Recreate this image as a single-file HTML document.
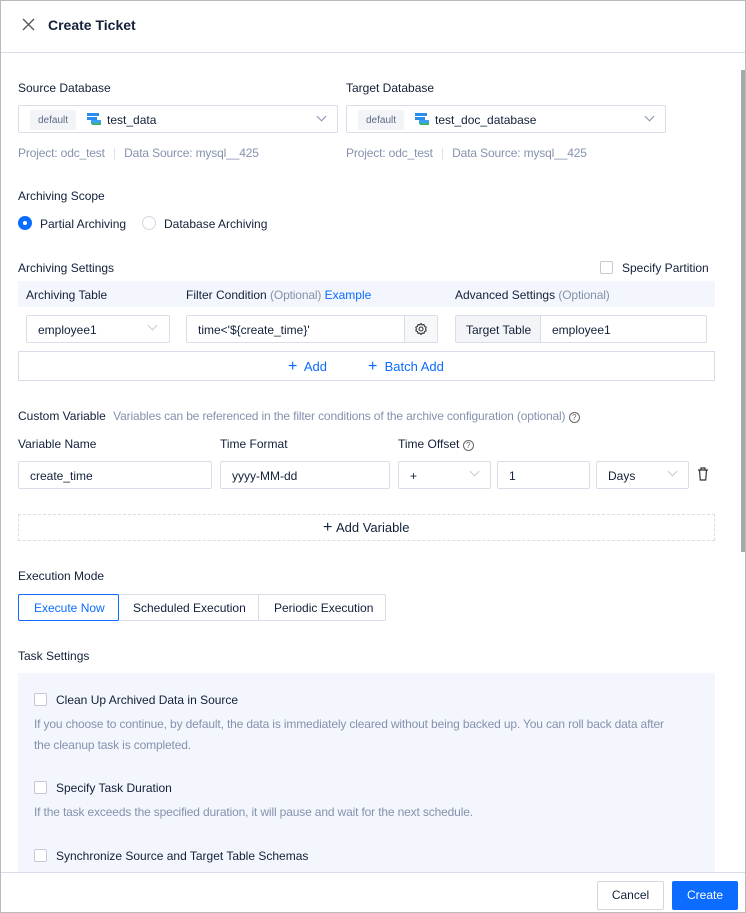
<!DOCTYPE html>
<html><head><meta charset="utf-8"><style>
*{box-sizing:border-box;margin:0;padding:0}
body{width:746px;height:913px;overflow:hidden;background:#fff;font-family:"Liberation Sans",sans-serif;font-size:12px;color:#132039;position:relative}
.a{position:absolute;white-space:nowrap}
.frame{position:absolute;left:0;top:0;width:746px;height:913px;border:1px solid #b9b9b9;pointer-events:none}
.box{position:absolute;border:1px solid #d9dde8;border-radius:2px;background:#fff}
.g{color:#8592ad;letter-spacing:-0.15px}
.lbl{font-size:12px;color:#132039}
.blue{color:#0b6cff}
.chev{position:absolute;width:7px;height:7px;border-right:1px solid #8592ad;border-bottom:1px solid #8592ad;transform:rotate(45deg)}
.tag{position:absolute;background:#f3f4f8;color:#5c6a84;font-size:10px;padding:0 8px;height:20px;line-height:21px;border-radius:2px}
.cb{position:absolute;width:13px;height:13px;border:1px solid #c5cad6;border-radius:2px;background:#fff}
</style></head><body>
<svg class="a" style="left:22px;top:18px" width="13" height="13"><path d="M1 1L12 12M12 1L1 12" stroke="#555" stroke-width="1.3"/></svg>
<div class="a" style="left:48px;top:17px;font-size:14px;font-weight:bold">Create Ticket</div>
<div class="a" style="left:0;top:52px;width:746px;height:1px;background:#d9dde8"></div>

<div class="a lbl" style="left:18px;top:81px">Source Database</div>
<div class="box" style="left:18px;top:105px;width:320px;height:28px"></div>
<div class="tag" style="left:30px;top:110px">default</div>
<svg class="a" style="left:86px;top:112px" width="16" height="14"><rect x="1" y="1" width="12" height="3" fill="#2b8cf0"/><rect x="1" y="5" width="10" height="3" fill="#2b8cf0"/><rect x="5" y="8" width="10" height="4" fill="#3aa0f5"/><rect x="6" y="11" width="9" height="2" fill="#3bb56b"/></svg>
<div class="a" style="left:107px;top:113px">test_data</div>
<div class="chev" style="left:318px;top:113px"></div>
<div class="a g" style="left:18px;top:146px">Project: odc_test <span style="color:#d9dde8;margin:0 5px">|</span> Data Source: mysql__425</div>

<div class="a lbl" style="left:346px;top:81px">Target Database</div>
<div class="box" style="left:346px;top:105px;width:320px;height:28px"></div>
<div class="tag" style="left:358px;top:110px">default</div>
<svg class="a" style="left:414px;top:112px" width="16" height="14"><rect x="1" y="1" width="12" height="3" fill="#2b8cf0"/><rect x="1" y="5" width="10" height="3" fill="#2b8cf0"/><rect x="5" y="8" width="10" height="4" fill="#3aa0f5"/><rect x="6" y="11" width="9" height="2" fill="#3bb56b"/></svg>
<div class="a" style="left:435px;top:113px">test_doc_database</div>
<div class="chev" style="left:646px;top:113px"></div>
<div class="a g" style="left:346px;top:146px">Project: odc_test <span style="color:#d9dde8;margin:0 5px">|</span> Data Source: mysql__425</div>

<div class="a lbl" style="left:18px;top:189px">Archiving Scope</div>
<div class="a" style="left:18px;top:216px;width:14px;height:14px;border-radius:50%;background:#0b6cff"></div>
<div class="a" style="left:23px;top:221px;width:4px;height:4px;border-radius:50%;background:#fff"></div>
<div class="a" style="left:40px;top:217px">Partial Archiving</div>
<div class="a" style="left:142px;top:216px;width:14px;height:14px;border-radius:50%;border:1px solid #d3d7e0"></div>
<div class="a" style="left:164px;top:217px">Database Archiving</div>

<div class="a lbl" style="left:18px;top:261px">Archiving Settings</div>
<div class="cb" style="left:600px;top:261px"></div>
<div class="a" style="left:622px;top:261px">Specify Partition</div>

<div class="a" style="left:18px;top:281px;width:697px;height:26px;background:#f3f6fc"></div>
<div class="a" style="left:26px;top:288px">Archiving Table</div>
<div class="a" style="left:186px;top:288px">Filter Condition <span class="g">(Optional)</span> <span class="blue">Example</span></div>
<div class="a" style="left:455px;top:288px">Advanced Settings <span class="g">(Optional)</span></div>
<div class="box" style="left:26px;top:315px;width:144px;height:28px"></div>
<div class="a" style="left:38px;top:323px">employee1</div>
<div class="chev" style="left:149px;top:322px;border-color:#c5cad6"></div>
<div class="box" style="left:186px;top:315px;width:252px;height:28px"></div>
<div class="a" style="left:404px;top:316px;width:33px;height:26px;background:#f7f8fa;border-left:1px solid #d9dde8"></div>
<svg class="a" style="left:414px;top:322px" width="14" height="14" viewBox="0 0 14 14"><circle cx="7" cy="7" r="2" fill="none" stroke="#333" stroke-width="1.1"/><path d="M7 1.5l1.2 1.4 1.8-.3.5 1.8 1.7.8-.6 1.8.6 1.8-1.7.8-.5 1.8-1.8-.3L7 12.5 5.8 11.1l-1.8.3-.5-1.8-1.7-.8.6-1.8-.6-1.8 1.7-.8.5-1.8 1.8.3z" fill="none" stroke="#333" stroke-width="1.1" stroke-linejoin="round"/></svg>
<div class="a" style="left:198px;top:323px">time&lt;'${create_time}'</div>
<div class="box" style="left:455px;top:315px;width:252px;height:28px"></div>
<div class="a" style="left:456px;top:316px;width:85px;height:26px;background:#f3f4f8;border-right:1px solid #d9dde8"></div>
<div class="a" style="left:466px;top:323px">Target Table</div>
<div class="a" style="left:552px;top:323px">employee1</div>
<div class="box" style="left:18px;top:351px;width:697px;height:30px;border-radius:0"></div>
<div class="a blue" style="left:288px;top:359px;font-size:13px"><span style="font-size:16px;line-height:12px">+</span>&nbsp; Add</div>
<div class="a blue" style="left:368px;top:359px;font-size:13px"><span style="font-size:16px;line-height:12px">+</span>&nbsp; Batch Add</div>

<div class="a lbl" style="left:18px;top:409px">Custom Variable <span class="g" style="margin-left:4px">Variables can be referenced in the filter conditions of the archive configuration (optional)</span> <span style="display:inline-block;width:11px;height:11px;border:1px solid #666;border-radius:50%;font-size:8px;text-align:center;line-height:10px;color:#666">?</span></div>
<div class="a lbl" style="left:18px;top:437px">Variable Name</div>
<div class="a lbl" style="left:220px;top:437px">Time Format</div>
<div class="a lbl" style="left:398px;top:437px">Time Offset <span style="display:inline-block;width:11px;height:11px;border:1px solid #666;border-radius:50%;font-size:8px;text-align:center;line-height:10px;color:#666">?</span></div>
<div class="box" style="left:18px;top:461px;width:194px;height:28px"></div>
<div class="a" style="left:30px;top:469px">create_time</div>
<div class="box" style="left:220px;top:461px;width:170px;height:28px"></div>
<div class="a" style="left:232px;top:469px">yyyy-MM-dd</div>
<div class="box" style="left:398px;top:461px;width:93px;height:28px"></div>
<div class="a" style="left:410px;top:469px">+</div>
<div class="chev" style="left:471px;top:468px;border-color:#c5cad6"></div>
<div class="box" style="left:497px;top:461px;width:93px;height:28px"></div>
<div class="a" style="left:509px;top:469px">1</div>
<div class="box" style="left:596px;top:461px;width:93px;height:28px"></div>
<div class="a" style="left:608px;top:469px">Days</div>
<div class="chev" style="left:669px;top:468px;border-color:#c5cad6"></div>
<svg class="a" style="left:697px;top:467px" width="12" height="14"><path d="M1 3h10M4 3V1h4v2M2.5 3l.8 10h5.4l.8-10" fill="none" stroke="#333" stroke-width="1.2"/></svg>

<div class="a" style="left:18px;top:514px;width:697px;height:27px;border:1px dashed #d9dde8"></div>
<div class="a" style="left:323px;top:520px;font-size:13px"><span style="font-size:16px;line-height:12px">+</span>&nbsp;Add Variable</div>

<div class="a lbl" style="left:18px;top:569px">Execution Mode</div>
<div class="a" style="left:18px;top:594px;width:368px;height:27px;border:1px solid #d9dde8;border-radius:2px"></div>
<div class="a" style="left:18px;top:594px;width:101px;height:27px;border:1px solid #0b6cff;border-radius:2px"></div>
<div class="a" style="left:258px;top:595px;width:1px;height:25px;background:#d9dde8"></div>
<div class="a blue" style="left:34px;top:601px">Execute Now</div>
<div class="a" style="left:133px;top:601px">Scheduled Execution</div>
<div class="a" style="left:274px;top:601px">Periodic Execution</div>

<div class="a lbl" style="left:18px;top:649px">Task Settings</div>
<div class="a" style="left:18px;top:673px;width:697px;height:200px;background:#f3f6fc"></div>
<div class="cb" style="left:34px;top:693px"></div>
<div class="a" style="left:56px;top:693px">Clean Up Archived Data in Source</div>
<div class="a g" style="left:34px;top:717px">If you choose to continue, by default, the data is immediately cleared without being backed up. You can roll back data after</div>
<div class="a g" style="left:34px;top:738px">the cleanup task is completed.</div>
<div class="cb" style="left:34px;top:781px"></div>
<div class="a" style="left:56px;top:781px">Specify Task Duration</div>
<div class="a g" style="left:34px;top:805px">If the task exceeds the specified duration, it will pause and wait for the next schedule.</div>
<div class="cb" style="left:34px;top:849px"></div>
<div class="a" style="left:56px;top:849px">Synchronize Source and Target Table Schemas</div>

<div class="a" style="left:0;top:872px;width:746px;height:41px;background:#fff;border-top:1px solid #d9dde8"></div>
<div class="a" style="left:597px;top:881px;width:67px;height:29px;border:1px solid #d3d7e0;border-radius:2px;text-align:center;line-height:27px">Cancel</div>
<div class="a" style="left:672px;top:881px;width:66px;height:29px;background:#0b6cff;color:#fff;border-radius:2px;text-align:center;line-height:29px">Create</div>

<div class="a" style="left:741px;top:70px;width:4px;height:482px;background:#a8a8a8"></div>
<div class="frame"></div>
</body></html>
